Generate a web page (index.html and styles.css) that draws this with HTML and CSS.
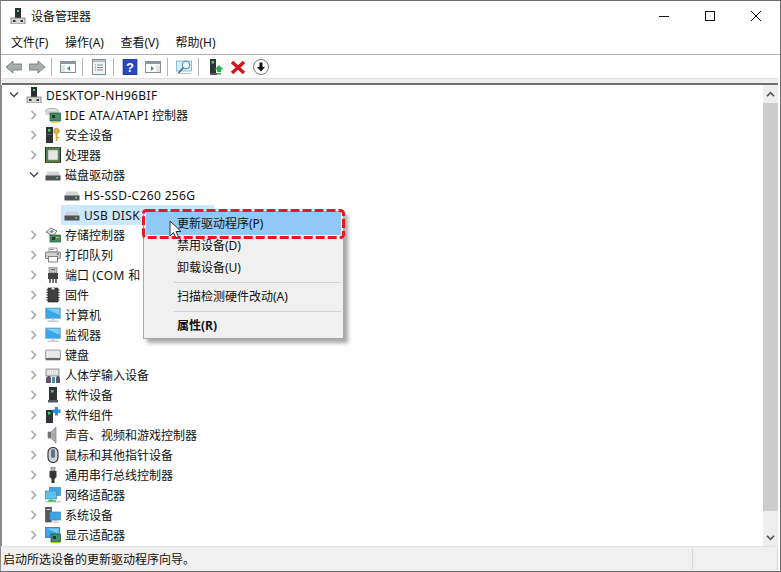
FILE: index.html
```html
<!DOCTYPE html>
<html lang="zh-CN">
<head>
<meta charset="utf-8">
<title>设备管理器</title>
<link rel="stylesheet" href="styles.css">
</head>
<body>
<svg class="defs" width="0" height="0">
<defs>
<symbol id="i-pc" viewBox="0 0 16 16"><rect x="5" y="0" width="6" height="10" fill="#2b2f33"/><rect x="7" y="2" width="2" height="2" fill="#3ddc5a"/><rect x="1" y="10" width="14" height="6" fill="#d8d8d8" stroke="#777" stroke-width=".8"/><rect x="3" y="12" width="2.5" height="2" fill="#333"/><rect x="10.500" y="12" width="2.500" height="2" fill="#333"/></symbol>
<symbol id="i-ide" viewBox="0 0 16 16"><ellipse cx="7" cy="4" rx="6.500" ry="2.500" fill="#e4e6e8" stroke="#8a8a8a" stroke-width=".7"/><rect x=".5" y="4" width="13" height="4" fill="#cfd2d4"/><rect x="5" y="6" width="10.500" height="8" fill="#3f8f5e" stroke="#23553a" stroke-width=".7"/><rect x="7" y="8" width="3" height="3" fill="#1e3a2a"/><rect x="6" y="14" width="9" height="1.500" fill="#d9b23a"/></symbol>
<symbol id="i-sec" viewBox="0 0 16 16"><rect x="1" y="0" width="7" height="16" fill="#2f3236"/><rect x="3" y="2" width="2.500" height="2.500" fill="#3ddc5a"/><rect x="2" y="7" width="5" height="1" fill="#666"/><circle cx="11.500" cy="4" r="2.800" fill="#e2b04a" stroke="#a87a22" stroke-width=".6"/><rect x="10.700" y="6" width="1.700" height="8" fill="#d9a53f"/><rect x="12" y="10" width="2" height="1.200" fill="#d9a53f"/></symbol>
<symbol id="i-cpu" viewBox="0 0 16 16"><rect x=".5" y=".5" width="15" height="15" fill="#4a7a4c" stroke="#233"/><rect x="3" y="3" width="10" height="10" fill="#e6e6e0" stroke="#9a9a90" stroke-width=".6"/><path d="M2 0v1M5 0v1M8 0v1M11 0v1M14 0v1M2 15v1M5 15v1M8 15v1M11 15v1M14 15v1" stroke="#c9a63a"/></symbol>
<symbol id="i-disk" viewBox="0 0 16 16"><path d="M2.500 4.500h11L15.500 9v3.500H.5V9z" fill="#d2d4d6"/><rect x=".5" y="8.500" width="15" height="5" rx=".5" fill="#4f5356"/><rect x="11" y="10" width="2" height="1.500" fill="#45d65f"/></symbol>
<symbol id="i-storage" viewBox="0 0 16 16"><path d="M1 5l5-4 6 3-4 5z" fill="#eceded" stroke="#555" stroke-width=".8"/><path d="M4 5l3-2 2 1-2 2z" fill="#888"/><rect x="5" y="8" width="10.500" height="7" fill="#3f8f5e" stroke="#23553a" stroke-width=".7"/><rect x="7" y="10" width="3" height="3" fill="#1e3a2a"/><rect x="11" y="10" width="3" height="1" fill="#d9b23a"/></symbol>
<symbol id="i-print" viewBox="0 0 16 16"><rect x="4" y="1" width="8" height="4" fill="#fff" stroke="#777" stroke-width=".7"/><path d="M5 2.500h2" stroke="#2a9ad8"/><path d="M7 2.500h2" stroke="#e0a030"/><rect x=".5" y="5" width="15" height="6.500" rx="1" fill="#d0d2d4" stroke="#666" stroke-width=".8"/><rect x="3.500" y="9.500" width="9" height="5.500" fill="#fff" stroke="#666" stroke-width=".8"/><rect x="12" y="6.500" width="2" height="1" fill="#333"/></symbol>
<symbol id="i-port" viewBox="0 0 16 16"><rect x="4" y="0" width="8" height="6" fill="#bfc1c3" stroke="#777" stroke-width=".6"/><rect x="6" y="2" width="4" height="1" fill="#666"/><rect x="3" y="6" width="10" height="6" fill="#444"/><path d="M5 12v4M8 12v4M11 12v4" stroke="#444" stroke-width="1.500"/></symbol>
<symbol id="i-chip" viewBox="0 0 16 16"><rect x="3" y="1" width="10" height="14" fill="#3d3f41" stroke="#1c1c1c" stroke-width=".6"/><path d="M1.500 3h1.500M1.500 5.500h1.500M1.500 8h1.500M1.500 10.500h1.500M1.500 13h1.500M13 3h1.500M13 5.500h1.500M13 8h1.500M13 10.500h1.500M13 13h1.500" stroke="#222"/><rect x="6.500" y="1" width="3" height="1.500" fill="#ddd"/></symbol>
<symbol id="i-monitor" viewBox="0 0 16 16"><rect x=".5" y="1" width="15" height="10.500" fill="#38a6e8" stroke="#8fb4c8" stroke-width=".8"/><path d="M1.500 2h13v6z" fill="#7fcbf2"/><rect x="6.500" y="11.500" width="3" height="2" fill="#c8ccd0"/><rect x="2.500" y="13.500" width="11" height="1.500" fill="#c5c9cd"/></symbol>
<symbol id="i-kbd" viewBox="0 0 16 16"><rect x=".5" y="3" width="15" height="10" rx="1" fill="#dcdcdc" stroke="#888" stroke-width=".7"/><path d="M2 5h12M2 7h12M2 9h12" stroke="#fff" stroke-dasharray="1.500 .6"/><rect x="1" y="11" width="14" height="2" fill="#666"/></symbol>
<symbol id="i-hid" viewBox="0 0 16 16"><rect x="1" y="2" width="13" height="7" fill="#d8d8d8" stroke="#777" stroke-width=".7"/><path d="M2.500 4h10M2.500 6h10" stroke="#fff" stroke-dasharray="1.500 .6"/><path d="M1 16v-5l2-2h2l1 2v5" fill="#556" /><path d="M7 16v-6h3v6" fill="#4a88b0"/><path d="M11 16v-5l1-2h2l1 2v5z" fill="#556"/></symbol>
<symbol id="i-soft" viewBox="0 0 16 16"><rect x="4" y="0" width="8" height="13" fill="#2f3236"/><rect x="6" y="3" width="2.500" height="2.500" fill="#3ddc5a"/><rect x="3" y="13" width="10" height="2.500" fill="#55595c"/></symbol>
<symbol id="i-comp" viewBox="0 0 16 16"><rect x="1" y="3" width="7" height="13" fill="#2f3236"/><rect x="3" y="5" width="2.500" height="2.500" fill="#3ddc5a"/><path d="M10 0h3v2.500h2.500V6H13v2.500h-3V6H7.500V2.500H10z" fill="#2c8fe0"/></symbol>
<symbol id="i-sound" viewBox="0 0 16 16"><path d="M3 5h3l5-5v16l-5-5H3z" fill="#a8aaac" stroke="#777" stroke-width=".6"/><rect x="3" y="5" width="3" height="6" fill="#707274"/></symbol>
<symbol id="i-mouse" viewBox="0 0 16 16"><rect x="3" y=".5" width="10" height="15" rx="5" fill="#cfd3d8" stroke="#2d2f33" stroke-width="1.100"/><rect x="6" y="2" width="4" height="9" rx="2" fill="#5d7488"/></symbol>
<symbol id="i-usb" viewBox="0 0 16 16"><rect x="6" y="0" width="4" height="4" fill="#b8babc" stroke="#555" stroke-width=".5"/><path d="M4.500 4h7v6l-2 2v4h-3v-4l-2-2z" fill="#333639"/></symbol>
<symbol id="i-net" viewBox="0 0 16 16"><rect x="4.500" y=".5" width="11" height="8" fill="#38a6e8" stroke="#4b86a8" stroke-width=".7"/><rect x=".5" y="4" width="11" height="8" fill="#5cc0f2" stroke="#4b86a8" stroke-width=".7"/><rect x="0" y="14" width="16" height="1.500" fill="#ccd0d2"/><path d="M6 12v2M3 14h8" stroke="#3bb54a" stroke-width="1.400"/></symbol>
<symbol id="i-sys" viewBox="0 0 16 16"><rect x=".5" y="0" width="6" height="15" fill="#55595c" stroke="#333" stroke-width=".5"/><rect x="1.500" y="2" width="4" height="1" fill="#ddd"/><rect x="5" y="5" width="10.500" height="8" fill="#38a6e8" stroke="#4b86a8" stroke-width=".7"/><rect x="8" y="13" width="4" height="1.500" fill="#bbb"/><rect x="6" y="14.500" width="8" height="1.200" fill="#ccc"/></symbol>
<symbol id="i-gpu" viewBox="0 0 16 16"><rect x=".5" y="0.500" width="14" height="10" fill="#38a6e8" stroke="#557" stroke-width=".7"/><path d="M1.500 1.500h12v5z" fill="#7fcbf2"/><rect x="6" y="7" width="9.500" height="8" fill="#3f8f5e" stroke="#23553a" stroke-width=".7"/><rect x="8" y="9" width="3" height="3" fill="#1e3a2a"/><rect x="7" y="15" width="8" height="1" fill="#d9b23a"/></symbol>
<symbol id="chev-r" viewBox="0 0 9 10"><path d="M2 1l4 4-4 4" fill="none" stroke="#a6a6a6" stroke-width="1.600"/></symbol>
<symbol id="chev-d" viewBox="0 0 10 9"><path d="M1 2l4 4 4-4" fill="none" stroke="#4a4a4a" stroke-width="1.500"/></symbol>
</defs>
</svg>

<div class="window">
  <header class="titlebar">
    <svg class="title-icon"><use href="#i-pc"/></svg>
    <span class="title-text">设备管理器</span>
    <div class="caption">
      <svg class="cap-btn" viewBox="0 0 46 30"><path d="M18 15.500h10" stroke="#111"/></svg>
      <svg class="cap-btn" viewBox="0 0 46 30"><rect x="18.500" y="10.500" width="9" height="9" fill="none" stroke="#111"/></svg>
      <svg class="cap-btn" viewBox="0 0 46 30"><path d="M18 10l10 10M28 10L18 20" stroke="#111"/></svg>
    </div>
  </header>

  <nav class="menubar">
    <span>文件(F)</span><span>操作(A)</span><span>查看(V)</span><span>帮助(H)</span>
  </nav>

  <div class="toolbar">
    <svg class="tool" viewBox="0 0 16 16"><path d="M0 8l7-6v3h9v6H7v3z" fill="#a9adad" stroke="#6d7272" stroke-width=".8"/></svg>
    <svg class="tool" viewBox="0 0 16 16"><path d="M16 8L9 2v3H0v6h9v3z" fill="#a9adad" stroke="#6d7272" stroke-width=".8"/></svg>
    <i class="sep"></i>
    <svg class="tool" viewBox="0 0 16 16"><rect x=".5" y="2.500" width="15" height="11" fill="#fff" stroke="#8a8f94"/><rect x="1" y="3" width="14" height="2" fill="#8b99a6"/><rect x="1" y="6" width="4" height="7" fill="#dde5ea"/><path d="M10 7v5L7 9.500z" fill="#22a75a"/></svg>
    <i class="sep"></i>
    <svg class="tool" viewBox="0 0 16 16"><rect x="1.500" y=".5" width="13" height="15" fill="#f2f2f2" stroke="#8a8f94"/><rect x="2" y="1" width="12" height="2" fill="#b8c0c6"/><path d="M4 6h1M6 6h6M4 8.500h1M6 8.500h6M4 11h1M6 11h6" stroke="#7b8a96"/><rect x="5" y="15" width="6" height="1" fill="#38a6e8"/></svg>
    <i class="sep"></i>
    <svg class="tool" viewBox="0 0 16 16"><rect x="1" y="0" width="14" height="16" fill="#2b49bf" stroke="#17267a" stroke-width=".6"/><text x="8" y="13" class="help-q">?</text></svg>
    <svg class="tool" viewBox="0 0 16 16"><rect x=".5" y="2.500" width="15" height="11" fill="#fff" stroke="#8a8f94"/><rect x="1" y="3" width="14" height="2" fill="#8b99a6"/><rect x="11" y="6" width="4" height="7" fill="#dde5ea"/><path d="M6 7v5l3-2.500z" fill="#22a75a"/></svg>
    <i class="sep"></i>
    <svg class="tool" viewBox="0 0 16 16"><rect x=".5" y="2" width="15" height="10" fill="#d5edf9" stroke="#7fa9c2" stroke-width=".8"/><circle cx="10" cy="6" r="3.800" fill="#eef8fd" stroke="#3c8ebd"/><path d="M7.500 8.500L2.500 14" stroke="#4d6a7c" stroke-width="1.500"/><rect x="1" y="14" width="14" height="1" fill="#b9c2c8"/></svg>
    <i class="sep"></i>
    <svg class="tool" viewBox="0 0 16 16"><rect x="3" y="0" width="6" height="14" fill="#2f3236"/><rect x="4.500" y="2" width="2.500" height="2.500" fill="#3ddc5a"/><rect x="3" y="14" width="7" height="2" fill="#55595c"/><path d="M12 6l4.500 4.500H14V13h-4v-2.500H7.500z" fill="#1fb14c"/><rect x="10" y="14" width="4" height="1.500" fill="#1fb14c"/></svg>
    <svg class="tool" viewBox="0 0 16 16"><path d="M2 3l12 11M14 3L2 14" stroke="#d8141a" stroke-width="3.400"/></svg>
    <svg class="tool" viewBox="0 0 16 16"><circle cx="8" cy="8" r="7.500" fill="#fff" stroke="#777"/><path d="M6.500 3.500h3V8H12l-4 4.500L4 8h2.500z" fill="#111"/></svg>
  </div>

  <div class="strip"></div>

  <main class="content">
    <ul class="tree">
      <li class="row root"><svg class="chev down"><use href="#chev-d"/></svg><svg class="ico"><use href="#i-pc"/></svg><span class="en">DESKTOP-NH96BIF</span></li>
      <li class="row"><svg class="chev"><use href="#chev-r"/></svg><svg class="ico"><use href="#i-ide"/></svg><span><span class="en">IDE ATA/ATAPI </span>控制器</span></li>
      <li class="row"><svg class="chev"><use href="#chev-r"/></svg><svg class="ico"><use href="#i-sec"/></svg><span>安全设备</span></li>
      <li class="row"><svg class="chev"><use href="#chev-r"/></svg><svg class="ico"><use href="#i-cpu"/></svg><span>处理器</span></li>
      <li class="row"><svg class="chev down"><use href="#chev-d"/></svg><svg class="ico"><use href="#i-disk"/></svg><span>磁盘驱动器</span></li>
      <li class="row child"><svg class="ico"><use href="#i-disk"/></svg><span class="en">HS-SSD-C260 256G</span></li>
      <li class="row child"><div class="selected"><svg class="ico"><use href="#i-disk"/></svg><span class="en">USB DISK</span></div></li>
      <li class="row"><svg class="chev"><use href="#chev-r"/></svg><svg class="ico"><use href="#i-storage"/></svg><span>存储控制器</span></li>
      <li class="row"><svg class="chev"><use href="#chev-r"/></svg><svg class="ico"><use href="#i-print"/></svg><span>打印队列</span></li>
      <li class="row"><svg class="chev"><use href="#chev-r"/></svg><svg class="ico"><use href="#i-port"/></svg><span>端口 <span class="en">(COM </span>和 LPT)</span></li>
      <li class="row"><svg class="chev"><use href="#chev-r"/></svg><svg class="ico"><use href="#i-chip"/></svg><span>固件</span></li>
      <li class="row"><svg class="chev"><use href="#chev-r"/></svg><svg class="ico"><use href="#i-monitor"/></svg><span>计算机</span></li>
      <li class="row"><svg class="chev"><use href="#chev-r"/></svg><svg class="ico"><use href="#i-monitor"/></svg><span>监视器</span></li>
      <li class="row"><svg class="chev"><use href="#chev-r"/></svg><svg class="ico"><use href="#i-kbd"/></svg><span>键盘</span></li>
      <li class="row"><svg class="chev"><use href="#chev-r"/></svg><svg class="ico"><use href="#i-hid"/></svg><span>人体学输入设备</span></li>
      <li class="row"><svg class="chev"><use href="#chev-r"/></svg><svg class="ico"><use href="#i-soft"/></svg><span>软件设备</span></li>
      <li class="row"><svg class="chev"><use href="#chev-r"/></svg><svg class="ico"><use href="#i-comp"/></svg><span>软件组件</span></li>
      <li class="row"><svg class="chev"><use href="#chev-r"/></svg><svg class="ico"><use href="#i-sound"/></svg><span>声音、视频和游戏控制器</span></li>
      <li class="row"><svg class="chev"><use href="#chev-r"/></svg><svg class="ico"><use href="#i-mouse"/></svg><span>鼠标和其他指针设备</span></li>
      <li class="row"><svg class="chev"><use href="#chev-r"/></svg><svg class="ico"><use href="#i-usb"/></svg><span>通用串行总线控制器</span></li>
      <li class="row"><svg class="chev"><use href="#chev-r"/></svg><svg class="ico"><use href="#i-net"/></svg><span>网络适配器</span></li>
      <li class="row"><svg class="chev"><use href="#chev-r"/></svg><svg class="ico"><use href="#i-sys"/></svg><span>系统设备</span></li>
      <li class="row"><svg class="chev"><use href="#chev-r"/></svg><svg class="ico"><use href="#i-gpu"/></svg><span>显示适配器</span></li>
    </ul>
    <div class="scrollbar">
      <div class="sb-btn"><svg viewBox="0 0 10 8" class="sb-arrow"><path d="M1 6l4-4 4 4" fill="none" stroke="#555" stroke-width="2"/></svg></div>
      <div class="sb-thumb"></div>
      <div class="sb-rest"></div>
      <div class="sb-btn"><svg viewBox="0 0 10 8" class="sb-arrow"><path d="M1 2l4 4 4-4" fill="none" stroke="#555" stroke-width="2"/></svg></div>
    </div>
  </main>

  <footer class="statusbar">
    <span class="status-text">启动所选设备的更新驱动程序向导。</span>
    <i class="status-cell"></i>
    <i class="status-cell last"></i>
  </footer>

  <div class="context-menu">
    <div class="menu-item active">更新驱动程序(P)</div>
    <div class="menu-item">禁用设备(D)</div>
    <div class="menu-item">卸载设备(U)</div>
    <div class="menu-sep"></div>
    <div class="menu-item">扫描检测硬件改动(A)</div>
    <div class="menu-sep"></div>
    <div class="menu-item bold">属性(R)</div>
  </div>
  <svg class="highlight" viewBox="0 0 203 30"><rect x="1.500" y="1.500" width="200" height="27" rx="3" class="highlight-rect"/></svg>
  <svg class="cursor" viewBox="0 0 13 20"><path d="M1 1v15l3.500-3.500L7 18l2.500-1L7 11.500h5z" fill="#fff" stroke="#333" stroke-width="1"/></svg>
</div>
</body>
</html>
```
FILE: styles.css
```css
* { box-sizing: border-box; }
html, body { margin: 0; padding: 0; }
body {
  width: 781px;
  height: 572px;
  overflow: hidden;
  background: #fff;
  font-family: "Noto Sans", "Noto Sans CJK SC", sans-serif;
  font-size: 12px;
  color: #111;
}
.defs { position: absolute; }
.window {
  position: relative;
  width: 781px;
  height: 572px;
  display: flex;
  flex-direction: column;
  border-top: 1px solid #6b6b6b;
  border-left: 1px solid #8a8a8a;
  border-right: 1px solid #6b6b6b;
  border-bottom: 1px solid #6b6b6b;
  background: #fff;
  overflow: hidden;
}
.titlebar {
  height: 29px;
  flex: none;
  display: flex;
  align-items: center;
  padding-left: 9px;
}
.title-icon { width: 16px; height: 16px; }
.title-text { margin-left: 5px; }
.caption { margin-left: auto; display: flex; padding-right: 1px; }
.cap-btn { width: 46px; height: 30px; }
.menubar {
  height: 25px;
  flex: none;
  display: flex;
  align-items: center;
  gap: 16.6px;
  padding-left: 10px;
  border-bottom: 1px solid #aeaeae;
}
.toolbar {
  height: 23px;
  flex: none;
  display: flex;
  align-items: center;
  padding-left: 5px;
  gap: 7px;
}
.tool { width: 16px; height: 16px; flex: none; }
.help-q { fill: #fff; font: bold 13px "Liberation Sans", sans-serif; text-anchor: middle; }
.sep { width: 1px; height: 18px; background: #b5b5b5; flex: none; margin: 0 1px 0 -1px; }
.strip {
  height: 7px;
  flex: none;
  background: #efefef;
  border-top: 1px solid #dfdfdf;
  border-bottom: 2px solid #6f6f6f;
  margin-left: 1px;
  margin-right: 2px;
}
.content {
  flex: 1;
  min-height: 0;
  display: flex;
  border-left: 1px solid #8a8a8a;
  margin-right: 2px;
  overflow: hidden;
}
.tree {
  list-style: none;
  margin: 0;
  padding: 0;
  flex: 1;
}
.row {
  height: 20px;
  display: flex;
  align-items: center;
  padding-left: 43px;
  position: relative;
  white-space: nowrap;
}
.row.root { padding-left: 24px; }
.row.child { padding-left: 62px; }
.row .ico { width: 16px; height: 16px; flex: none; margin-right: 4px; }
.en { letter-spacing: .35px; white-space: pre; }
.chev { width: 10px; height: 10px; flex: none; position: absolute; left: 27px; top: 5px; }
.root .chev { left: 7px; }
.selected {
  display: flex;
  align-items: center;
  height: 20px;
  width: 153px;
  padding-left: 3px;
  margin-left: -3px;
  background: #cce8ff;
}
.scrollbar {
  width: 15px;
  flex: none;
  display: flex;
  flex-direction: column;
  background: #eeeeee;
}
.sb-btn { height: 18px; flex: none; display: flex; align-items: center; justify-content: center; }
.sb-arrow { width: 9px; height: 7px; }
.sb-thumb { height: 408px; flex: none; background: #cdcdcd; }
.sb-rest { flex: 1; }
.statusbar {
  height: 25px;
  flex: none;
  display: flex;
  align-items: center;
  background: #f0f0f0;
  border-top: 1px solid #e2e2e2;
  padding-left: 2px;
  margin-right: 2px;
}
.status-text { flex: 1; }
.status-cell { width: 85px; height: 21px; border-left: 1px solid #d6d6d6; flex: none; }
.status-cell.last { width: 1px; }
.context-menu {
  position: absolute;
  left: 142px;
  top: 210px;
  width: 201px;
  height: 128px;
  padding: 0 2px 2px;
  background: #f0f0f0;
  border: 1px solid #a8a8a8;
  box-shadow: 4px 4px 4px rgba(0,0,0,.35);
  z-index: 2;
}
.menu-item {
  height: 22px;
  line-height: 22px;
  padding-left: 31px;
  color: #111;
}
.menu-item.active { background: #90c8f6; height: 23px; line-height: 23px; }
.menu-item.bold { font-weight: 700; height: 21px; line-height: 21px; }
.menu-sep { height: 1px; background: #d4d4d4; margin: 3px 0 3px 28px; }
.highlight {
  position: absolute;
  left: 141px;
  top: 208px;
  width: 203px;
  height: 30px;
  z-index: 3;
}
.highlight-rect {
  fill: none;
  stroke: #ee1420;
  stroke-width: 3;
  stroke-dasharray: 9 3;
}
.cursor {
  position: absolute;
  left: 168px;
  top: 219px;
  width: 13px;
  height: 20px;
  z-index: 4;
}
```
